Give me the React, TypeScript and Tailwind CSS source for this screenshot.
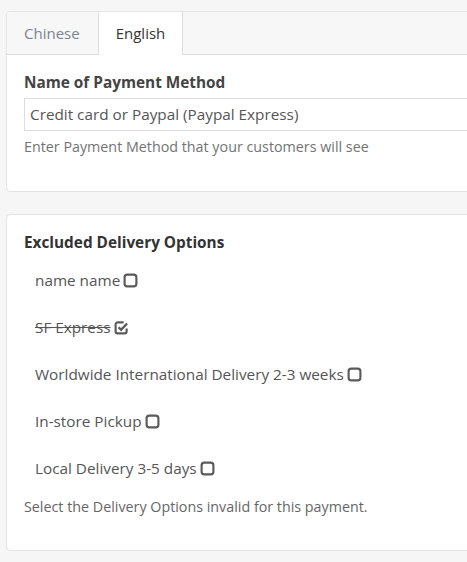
import React from "react";

function Box({ checked }: { checked?: boolean }) {
  if (checked) {
    return (
      <svg width="15" height="15" viewBox="0 0 14 14" className="inline-block align-[-2px] ml-[3px]">
        <path d="M9 2.2H3.5a2 2 0 0 0-2 2v6.3a2 2 0 0 0 2 2h6.3a2 2 0 0 0 2-2V8" fill="none" stroke="#5a5a5a" strokeWidth="2" />
        <path d="M4.3 6.8l2.3 2.3 5.6-5.8" fill="none" stroke="#5a5a5a" strokeWidth="2.2" />
      </svg>
    );
  }
  return (
    <svg width="15" height="15" viewBox="0 0 14 14" className="inline-block align-[-2px] ml-[3px]">
      <rect x="1.5" y="1.5" width="11" height="11" rx="2.5" fill="none" stroke="#5a5a5a" strokeWidth="2" />
    </svg>
  );
}

const items: { label: string; checked?: boolean }[] = [
  { label: "name name" },
  { label: "SF Express", checked: true },
  { label: "Worldwide International Delivery 2-3 weeks" },
  { label: "In-store Pickup" },
  { label: "Local Delivery 3-5 days" },
];

export default function App() {
  return (
    <div className="w-[467px] h-[562px] overflow-hidden bg-[#f6f6f6] pt-[11px] pl-[6px]" style={{ fontFamily: '"Open Sans", "Liberation Sans", sans-serif' }}>
      <div className="w-[520px] bg-white border border-[#e3e3e3] rounded-[4px]">
        <div className="flex h-[43px] bg-[#f7f7f7] border-b border-[#dddddd] rounded-t-[4px]">
          <div className="px-[17px] flex items-center text-[15px] text-[#7b8591] w-[91px]">Chinese</div>
          <div className="-mb-px h-[43px] w-[85px] flex items-center justify-center bg-white border-x border-[#dddddd] text-[15px] text-[#333333]">English</div>
        </div>
        <div className="px-[17px] pt-[17px] pb-[35px]">
          <div className="text-[15.35px] leading-[20px] font-bold text-[#444444]">Name of Payment Method</div>
          <div className="mt-[6px] h-[33px] border border-[#dddddd] flex items-center px-[5px] text-[15.3px] text-[#555555]">
            Credit card or Paypal (Paypal Express)
          </div>
          <div className="mt-[7px] text-[14.3px] leading-[18px] text-[#737373]">Enter Payment Method that your customers will see</div>
        </div>
      </div>

      <div className="mt-[22px] w-[520px] bg-white border border-[#e3e3e3] rounded-[4px] px-[17px] pt-[17px] pb-[34px]">
        <div className="text-[15.35px] leading-[20px] font-bold text-[#333333]">Excluded Delivery Options</div>
        <div className="mt-[18px] pl-[11px] flex flex-col gap-[27px]">
          {items.map((it) => (
            <div key={it.label} className="text-[15.3px] leading-[20px] text-[#555555]">
              <span className={it.checked ? "line-through" : ""}>{it.label}</span>
              <Box checked={it.checked} />
            </div>
          ))}
        </div>
        <div className="mt-[20px] text-[14.3px] leading-[18px] text-[#666666]">Select the Delivery Options invalid for this payment.</div>
      </div>
    </div>
  );
}
